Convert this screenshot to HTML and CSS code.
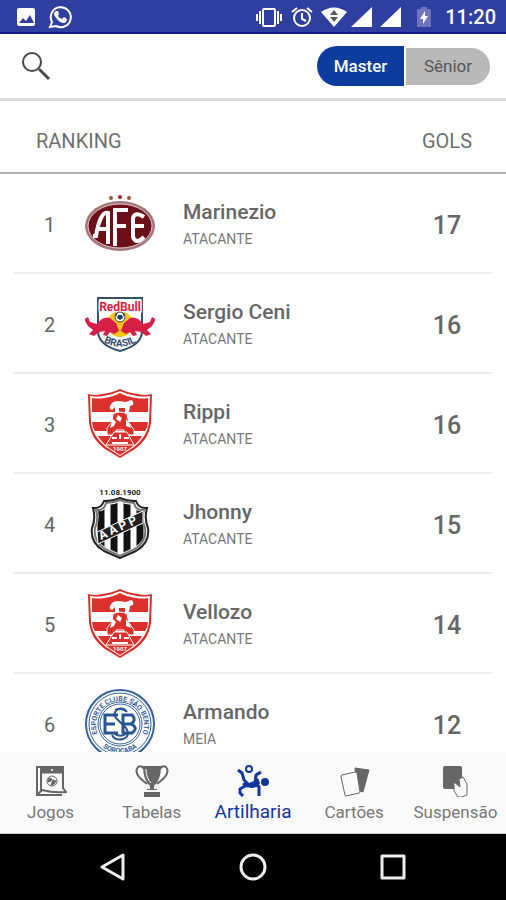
FILE: index.html
```html
<!DOCTYPE html>
<html lang="pt-BR">
<head>
    <meta charset="UTF-8">
    <meta name="viewport" content="width=device-width, initial-scale=1.0">
    <title>Artilharia</title>
    <link rel="stylesheet" href="styles.css">
</head>
<body>
    <div class="app">
        <div class="status-bar">
            <svg width="20" height="20" viewBox="0 0 20 20"><rect x="1" y="1" width="18" height="18" rx="2" fill="#fff"/><path fill="#303f9f" d="M3 16l4-5 3 3 4-6 4 8z"/></svg>
            <svg class="whatsapp" width="24" height="24" viewBox="0 0 24 24"><path fill="none" stroke="#fff" stroke-width="2" d="M2 22l2-5a10 10 0 1 1 4 4z"/><path fill="#fff" d="M8 6l2 0 1 3-1 2q1 2 4 3l2-2 3 2q0 3-3 4-4 0-7-4-3-3-3-5 0-2 2-3z"/></svg>
            <span class="status-space"></span>
            <svg width="28" height="22" viewBox="0 0 28 22"><rect x="8" y="3" width="12" height="17" rx="1" fill="none" stroke="#fff" stroke-width="2"/><path stroke="#fff" stroke-width="2" d="M5 5v13M2 8v7M23 5v13M26 8v7"/></svg>
            <svg class="alarm" width="22" height="22" viewBox="0 0 22 22"><circle cx="11" cy="12" r="8" fill="none" stroke="#fff" stroke-width="2"/><path fill="none" stroke="#fff" stroke-width="2" d="M1 6l5-4M21 6l-5-4M11 7v6l4 2"/></svg>
            <svg class="wifi" width="26" height="20" viewBox="0 0 26 20"><path fill="#fff" d="M0 5q13-9 26 0L13 20z"/><path fill="#555" d="M9 8l4-5 4 5zM9 10l4 5 4-5z"/></svg>
            <svg class="signal" width="21" height="20" viewBox="0 0 21 20"><path fill="#fff" d="M21 0v20H0z"/></svg>
            <svg class="signal second" width="21" height="20" viewBox="0 0 21 20"><path fill="#fff" d="M21 0v20H0z"/></svg>
            <svg class="battery" width="14" height="20" viewBox="0 0 14 20"><path fill="#6d76bd" d="M4 0h6v2h3q1 0 1 1v16q0 1-1 1H1q-1 0-1-1V3q0-1 1-1h3z"/><path fill="#fff" d="M8 4l-5 8h3v5l5-8H8z"/></svg>
            <span class="clock">11:20</span>
        </div>

        <header class="toolbar">
            <button type="button" class="search" aria-label="Buscar">
                <svg width="30" height="30" viewBox="0 0 30 30" fill="none" stroke="#484848"><circle cx="11" cy="11" r="9" stroke-width="2"/><path stroke-width="3" d="M18 18l10 10"/></svg>
            </button>
            <div class="switch">
                <button type="button" class="switch-item active">Master</button>
                <button type="button" class="switch-item">Sênior</button>
            </div>
        </header>

        <main class="content">
            <table class="ranking">
                <colgroup>
                    <col class="col-position">
                    <col class="col-crest">
                    <col>
                    <col class="col-goals">
                </colgroup>
                <thead>
                    <tr>
                        <th class="title" colspan="3">RANKING</th>
                        <th>GOLS</th>
                    </tr>
                </thead>
                <tbody>
                    <tr>
                        <td class="position">1</td>
                        <td class="crest">
                            <svg width="70" height="70" viewBox="0 0 70 70">
                                <circle cx="26" cy="9" r="2" fill="#865f36"/><circle cx="35" cy="8" r="2" fill="#9b2030"/><circle cx="44" cy="9" r="2" fill="#865f36"/>
                                <ellipse cx="35" cy="37" rx="35" ry="25" fill="#a5777b"/>
                                <ellipse cx="35" cy="37" rx="32" ry="22" fill="#6b1018" stroke="#dfc6c8" stroke-width="1"/>
                                <g fill="none" stroke="#fff" stroke-width="4">
                                    <path d="M8 47h3q2-12 5-18 3-6 7-5v31M13 40h10"/>
                                    <path d="M30 57V21h13M30 37h11"/>
                                    <path d="M59 28q-9-6-11 1v19q3 8 11 0M48 37h11"/>
                                </g>
                            </svg>
                        </td>
                        <td class="player"><strong>Marinezio</strong><span>ATACANTE</span></td>
                        <td class="goals">17</td>
                    </tr>
                    <tr>
                        <td class="position">2</td>
                        <td class="crest">
                            <svg width="70" height="70" viewBox="0 0 70 70">
                                <path fill="#fff" stroke="#35506b" stroke-width="2" d="M13 9h44v33q0 14-22 20Q13 56 13 42z"/>
                                <circle cx="35" cy="35" r="13" fill="#f9c51c"/>
                                <text x="35" y="22" fill="#d91d43" stroke="#fff" stroke-width="3" paint-order="stroke" font-size="12" font-weight="700" text-anchor="middle">RedBull</text>
                                <path fill="#d61f44" d="M3 28l2 5 7 2q6-8 13-6l6 5 3 8-5 3-4-2-3 4-4-1 2-4-6 1-5 4-5-2 4-4-5-4-3-5-2-1z"/>
                                <path fill="#d61f44" d="M67 28l-2 5-7 2q-6-8-13-6l-6 5-3 8 5 3 4-2 3 4 4-1-2-4 6 1 5 4 5-2-4-4 5-4 3-5 2-1z"/>
                                <circle cx="35" cy="28" r="5" fill="#fff" stroke="#34485f" stroke-width="1"/>
                                <path fill="#243c57" d="M33 26h4l1 3-3 2-3-2zM30 25l3-2-2 5zM40 25l-3-2 2 5z"/>
                                <path id="brasil-curve" fill="none" d="M15 51q20 13 40 0"/>
                                <text fill="#354d69" font-size="10" font-weight="700" text-anchor="middle"><textPath href="#brasil-curve" startOffset="50%">BRASIL</textPath></text>
                            </svg>
                        </td>
                        <td class="player"><strong>Sergio Ceni</strong><span>ATACANTE</span></td>
                        <td class="goals">16</td>
                    </tr>
                    <tr>
                        <td class="position">3</td>
                        <td class="crest">
                            <svg width="70" height="70" viewBox="0 0 70 70">
                                <g id="shield-1907">
                                    <path fill="#d92b27" d="M3 5q8 2 14 0Q27 4 35 0q8 4 18 5 6 2 14 0l-1 29Q64 50 50 60L35 69 20 60Q6 50 4 34z"/>
                                    <path fill="#fff" d="M5 7q8 1 13 0 9-1 17-5 8 4 17 5 5 1 13 0l-1 27q-2 14-15 24l-14 9-14-9Q8 48 6 34z"/>
                                    <path fill="#db302b" d="M7 9q7 1 12 0 9-1 16-5 7 4 16 5 5 1 12 0v14H7zM7 33h56q0 5-3 9H10q-3-4-3-9zM13 47h44q-4 7-10 11l-12 8-12-8q-6-4-10-11z"/>
                                    <path fill="#fff" d="M25 17q2-5 8-5l8 1 5-2q3 1 2 5l-3 1-1 6h-4v-4h-6v4h-4v-5l-3 3q-3-1-2-4z"/>
                                    <path fill="#db302b" stroke="#fff" stroke-width="1" d="M28 25q7-4 14 0l2 9 5 7v5H39v-5h-8v5H22v-7l5-6z"/>
                                    <path fill="#fff" d="M28 30l3 3-2 4-4 2zM41 30l4 5 1 4-5-2zM33 26l4 3-2 4-4-3z"/>
                                    <path fill="#db302b" stroke="#fff" stroke-width="1" d="M29 43h13l7 13H21z"/>
                                    <path stroke="#fff" stroke-width="2" d="M27 49h5m3-4v5m4-1h5M27 54h16"/>
                                    <text x="35" y="62" fill="#fff" font-size="6" font-weight="700" text-anchor="middle">1907</text>
                                </g>
                            </svg>
                        </td>
                        <td class="player"><strong>Rippi</strong><span>ATACANTE</span></td>
                        <td class="goals">16</td>
                    </tr>
                    <tr>
                        <td class="position">4</td>
                        <td class="crest">
                            <svg width="70" height="70" viewBox="0 0 70 70">
                                <defs>
                                    <clipPath id="aapp-clip"><path d="M13 22q7 1 9-6 7 0 13-3 6 3 13 3 2 7 9 6-2 9 2 17 2 12-9 19l-15 7-15-7q-11-7-9-19 4-8 2-17z"/></clipPath>
                                </defs>
                                <text x="35" y="6" fill="#222" font-size="8" font-weight="700" text-anchor="middle">11.08.1900</text>
                                <path fill="#fff" stroke="#222" stroke-width="2" d="M8 19q8 1 11-7 9 0 16-3 7 3 16 3 3 8 11 7-3 11 1 20 2 15-12 23l-16 7-16-7Q5 54 7 39q4-9 1-20z"/>
                                <path fill="#fff" stroke="#777" stroke-width="2" d="M11 21q8 1 10-7 7 0 14-3 7 3 14 3 2 8 10 7-3 9 1 18 2 13-10 21l-15 7-15-7Q8 52 10 39q4-9 1-18z"/>
                                <g clip-path="url(#aapp-clip)">
                                    <path stroke="#111" stroke-width="7" d="M16 10v58M29 10v58M42 10v58M55 10v58"/>
                                </g>
                                <path fill="#222" stroke="#fff" stroke-width="1" d="M12 43l46-21v12L13 55z"/>
                                <text transform="translate(16 51) rotate(-25)" fill="#fff" font-size="12" font-weight="700">A A P P</text>
                            </svg>
                        </td>
                        <td class="player"><strong>Jhonny</strong><span>ATACANTE</span></td>
                        <td class="goals">15</td>
                    </tr>
                    <tr>
                        <td class="position">5</td>
                        <td class="crest"><svg width="70" height="70" viewBox="0 0 70 70"><use href="#shield-1907"/></svg></td>
                        <td class="player"><strong>Vellozo</strong><span>ATACANTE</span></td>
                        <td class="goals">14</td>
                    </tr>
                    <tr>
                        <td class="position">6</td>
                        <td class="crest">
                            <svg width="70" height="70" viewBox="0 0 70 70">
                                <g fill="none" stroke="#36619b">
                                    <circle cx="35" cy="35" r="34" stroke-width="2"/>
                                    <circle cx="35" cy="35" r="31" stroke-width="1"/>
                                    <circle cx="35" cy="35" r="22" stroke-width="1"/>
                                    <circle cx="35" cy="35" r="20" stroke-width="1"/>
                                    <path id="ring-top" stroke="none" d="M12 43a24 24 0 1 1 46 0"/>
                                    <path id="ring-bottom" stroke="none" d="M9 48a29 29 0 0 0 52 0"/>
                                </g>
                                <g fill="#36619b" font-size="7" font-weight="700" text-anchor="middle">
                                    <text><textPath href="#ring-top" startOffset="50%">ESPORTE CLUBE SÃO BENTO</textPath></text>
                                    <text><textPath href="#ring-bottom" startOffset="50%">SOROCABA</textPath></text>
                                </g>
                                <g fill="none" stroke="#28548f" stroke-width="3">
                                    <path d="M33 26H20v18h13M20 35h10"/>
                                    <path d="M38 26h9q5 5-1 9 8 4 1 9h-9zM38 35h9"/>
                                    <path stroke-width="2" d="M42 23q-3-5-9-3-7 5 0 11l8 8q5 8-3 11-8 2-11-4M30 21q8-3 12 2M29 44q5 5 12 1"/>
                                </g>
                            </svg>
                        </td>
                        <td class="player"><strong>Armando</strong><span>MEIA</span></td>
                        <td class="goals">12</td>
                    </tr>
                </tbody>
            </table>
        </main>

        <nav class="tabs">
            <a href="#jogos">
                <svg width="32" height="32" viewBox="0 0 32 32" fill="none" stroke="#666" stroke-width="1">
                    <path stroke-width="2" d="M28 24V2H2v28h25M6 3v24"/>
                    <path fill="#666" d="M6 3h22v5H6z"/><circle cx="17" cy="5" r="1" fill="#fff" stroke="none"/>
                    <path stroke-width="2" d="M3 29l4-4q11 3 24 2l-3-4"/>
                    <circle cx="17" cy="16" r="5"/><path fill="#666" d="M14 13l3 1-1 2-3 1zM18 15l3 1-2 3-3 1z"/>
                </svg>
                <span>Jogos</span>
            </a>
            <a href="#tabelas">
                <svg width="34" height="32" viewBox="0 0 34 32">
                    <path fill="none" stroke="#666" stroke-width="2" d="M9 4Q7 0 3 2q-4 5 3 12l6 5M25 4q2-4 6-2 4 5-3 12l-6 5"/>
                    <path fill="#666" d="M8 1h18q0 14-7 20v4h-4v-4Q8 15 8 1zM9 27h16v5H9zM12 24h10v1H12z"/>
                    <path fill="none" stroke="#fff" stroke-width="1" d="M11 4q0 9 5 14"/>
                </svg>
                <span>Tabelas</span>
            </a>
            <a href="#artilharia" class="current">
                <svg width="32" height="34" viewBox="0 0 32 34" fill="none" stroke="#1235a0">
                    <circle cx="12" cy="4" r="3" stroke-width="2"/>
                    <circle cx="28" cy="17" r="4" fill="#1235a0" stroke="none"/>
                    <path stroke-width="3" stroke-linejoin="round" d="M1 5l4 3 2 7 5 5M24 7l-5 3-1 8M8 21l-5 3v4l3 3M19 18l3 4v9"/>
                    <path fill="#1235a0" stroke="none" d="M8 17l4 1 5-2 4-3 2 5-3 4-5 1-7-1-3-3z"/>
                </svg>
                <span>Artilharia</span>
            </a>
            <a href="#cartoes">
                <svg width="32" height="32" viewBox="0 0 32 32" stroke="#666">
                    <path fill="#666" d="M17 3l14 2-6 22-6-2z"/>
                    <path fill="#fafafa" stroke-width="1" d="M4 10l13-3q1 0 2 1l3 19q0 1-1 1L8 31q-1 0-1-1L3 12q0-2 1-2z"/>
                </svg>
                <span>Cartões</span>
            </a>
            <a href="#suspensao">
                <svg width="32" height="32" viewBox="0 0 32 32">
                    <rect x="4" y="1" width="19" height="23" rx="2" fill="#666"/>
                    <path fill="#fafafa" stroke="#666" stroke-width="1" d="M15 17l6 5-1-8 4-2 4 7v11l-5 2h-4l-4-6z"/>
                </svg>
                <span>Suspensão</span>
            </a>
        </nav>

        <div class="system-nav">
            <button type="button" aria-label="Voltar"><svg width="28" height="28" viewBox="0 0 28 28"><path d="M24 2v24L3 14z"/></svg></button>
            <button type="button" aria-label="Início"><svg width="28" height="28" viewBox="0 0 28 28"><circle cx="14" cy="14" r="12"/></svg></button>
            <button type="button" aria-label="Recentes"><svg width="28" height="28" viewBox="0 0 28 28"><rect x="3" y="3" width="22" height="22"/></svg></button>
        </div>
    </div>
</body>
</html>
```
FILE: styles.css
```css
* {
    box-sizing: border-box;
}

body {
    margin: 0;
    background-color: #fff;
    color: #666;
    font-family: Roboto, sans-serif;
}

button {
    border: none;
    padding: 0;
    background: none;
    font-family: inherit;
    cursor: pointer;
}

svg {
    display: block;
    flex-shrink: 0;
}

.app {
    display: flex;
    flex-direction: column;
    height: 100vh;
}

.status-bar {
    display: flex;
    align-items: center;
    height: 34px;
    padding: 2px 10px 0 16px;
    background-color: #303f9f;
    border-bottom: 2px solid #10188c;
    color: #fff;
    flex-shrink: 0;
}

.whatsapp {
    margin-left: 12px;
}

.status-space {
    flex: 1;
}

.signal {
    margin-left: 4px;
}

.alarm,
.wifi,
.signal.second {
    margin-left: 8px;
}

.battery {
    margin: 0 14px 0 16px;
}

.clock {
    font-size: 20px;
    font-weight: 500;
}

.toolbar {
    display: flex;
    justify-content: space-between;
    align-items: center;
    height: 67px;
    padding: 0 16px 0 21px;
    border-bottom: 3px solid #dcdcdc;
    flex-shrink: 0;
}

.switch {
    display: flex;
    align-items: center;
    gap: 2px;
}

.switch-item {
    width: 84px;
    height: 37px;
    background-color: #b9b9b9;
    border-radius: 0 19px 19px 0;
    color: #555;
    font-size: 17px;
}

.switch-item.active {
    width: 87px;
    height: 40px;
    background-color: #0d3b9e;
    border-radius: 20px 0 0 20px;
    color: #fff;
    font-weight: 500;
}

.content {
    flex: 1;
    min-height: 0;
    overflow: hidden;
}

.ranking {
    width: 100%;
    border-collapse: collapse;
    table-layout: fixed;
}

.col-position {
    width: 85px;
}

.col-crest {
    width: 98px;
}

.col-goals {
    width: 118px;
}

.ranking th,
.ranking td {
    padding: 0;
}

.ranking thead tr {
    height: 73px;
    background: linear-gradient(#b4b4b4, #b4b4b4) bottom / 100% 2px no-repeat;
}

.ranking th {
    padding-top: 6px;
    color: #707070;
    font-size: 20px;
    font-weight: 400;
}

.ranking .title {
    padding-left: 36px;
    text-align: left;
}

.ranking tbody tr {
    height: 100px;
    background: linear-gradient(#ececec, #ececec) bottom / calc(100% - 28px) 2px no-repeat;
}

.ranking .position {
    padding: 2px 0 0 14px;
    text-align: center;
    font-size: 20px;
}

.player strong,
.player span {
    display: block;
}

.player strong {
    margin-bottom: 4px;
    font-size: 21px;
    font-weight: 500;
    line-height: 26px;
}

.player span {
    color: #777;
    font-size: 14px;
    line-height: 20px;
}

.ranking .goals {
    padding-top: 2px;
    text-align: center;
    font-size: 25px;
    font-weight: 500;
}

.tabs {
    display: flex;
    height: 82px;
    padding-top: 3px;
    background-color: #fafafa;
    border-bottom: 1px solid #ccc;
    flex-shrink: 0;
}

.tabs a {
    display: flex;
    flex: 1;
    flex-direction: column;
    align-items: center;
    justify-content: center;
    gap: 4px;
    color: #777;
    font-size: 17px;
    line-height: 22px;
    text-decoration: none;
}

.tabs a.current {
    gap: 2px;
    color: #1235a0;
    font-size: 19px;
}

.system-nav {
    display: flex;
    justify-content: center;
    align-items: center;
    gap: 112px;
    height: 66px;
    background-color: #000;
    flex-shrink: 0;
}

.system-nav svg {
    fill: none;
    stroke: #eee;
    stroke-width: 3;
    stroke-linejoin: round;
}
```
